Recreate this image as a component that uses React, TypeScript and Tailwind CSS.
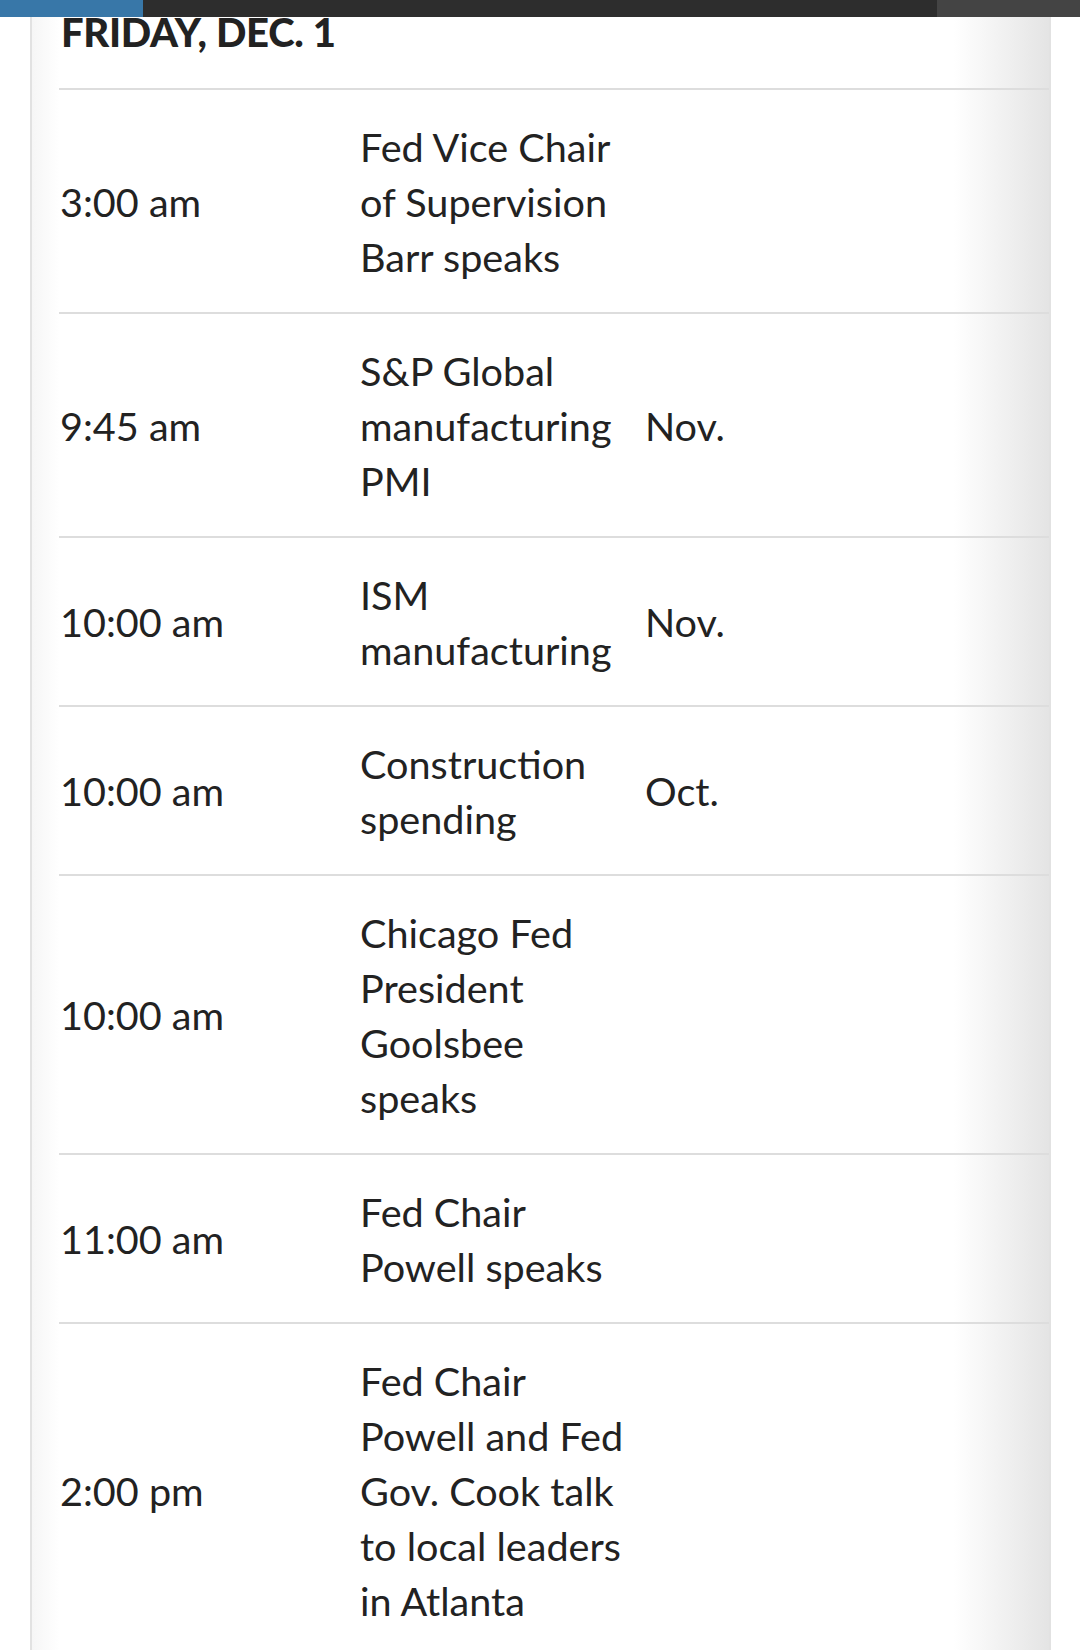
import React from 'react';

interface Row {
  time: string;
  event: string;
  period?: string;
}

const rows: Row[] = [
  { time: '3:00 am', event: 'Fed Vice Chair of Supervision Barr speaks' },
  { time: '9:45 am', event: 'S&P Global manufacturing PMI', period: 'Nov.' },
  { time: '10:00 am', event: 'ISM manufacturing', period: 'Nov.' },
  { time: '10:00 am', event: 'Construction spending', period: 'Oct.' },
  { time: '10:00 am', event: 'Chicago Fed President Goolsbee speaks' },
  { time: '11:00 am', event: 'Fed Chair Powell speaks' },
  { time: '2:00 pm', event: 'Fed Chair Powell and Fed Gov. Cook talk to local leaders in Atlanta' },
];

const App: React.FC = () => {
  return (
    <div className="h-[1650px] overflow-hidden bg-white font-['Lato','Liberation_Sans',sans-serif] text-[#222]">
      {/* top bar */}
      <div className="flex h-[17px]">
        <div className="w-[143px] bg-[#3877a8]" />
        <div className="w-[794px] bg-[#2d2d2d]" />
        <div className="flex-1 bg-[#444]" />
      </div>

      <div className="ml-[30px] w-[1021px] min-h-[1633px] border-x-2 border-[#e2e2e2] bg-[linear-gradient(to_right,#f6f6f6,#ffffff_28px,#ffffff_calc(100%-95px),#e4e4e4)] pl-[27px]">
        <div className="h-[73px] border-b-2 border-[#dddddd]">
          <h2 className="pl-[2px] pt-[3px] text-[40px] font-black leading-[24px] tracking-[-0.3px]">FRIDAY, DEC. 1</h2>
        </div>

        {rows.map((row, i) => (
          <div
            key={i}
            className="grid grid-cols-[301px_285px_1fr] items-center border-b-2 border-[#dddddd] py-[28.5px] text-[39.6px] leading-[55px]"
          >
            <div className="pl-[1px]">{row.time}</div>
            <div className="pr-[12px]">{row.event}</div>
            <div>{row.period}</div>
          </div>
        ))}
      </div>
    </div>
  );
};

export default App;
